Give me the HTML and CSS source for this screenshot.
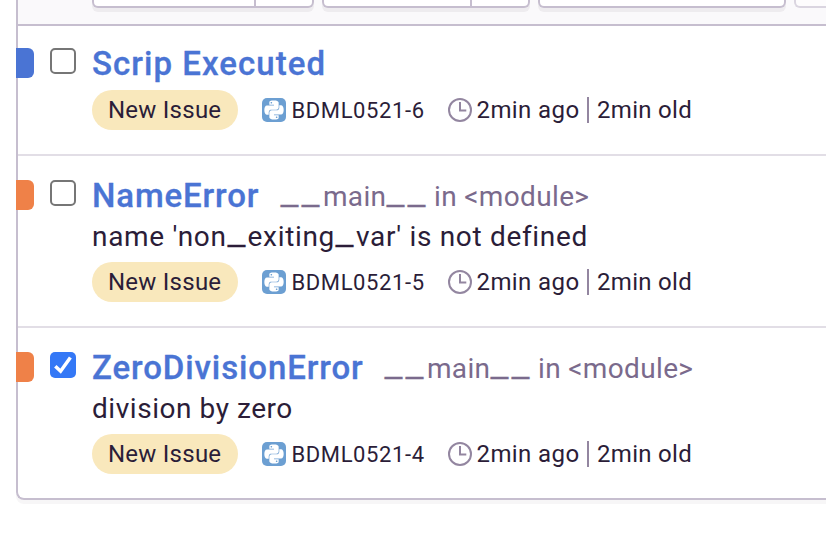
FILE: index.html
```html
<!DOCTYPE html>
<html lang="en">
<head>
<meta charset="utf-8">
<title>Issues</title>
<link rel="stylesheet" href="styles.css">
</head>
<body>
<svg class="defs" width="0" height="0" aria-hidden="true">
  <symbol id="python" viewBox="0 0 24 24">
    <rect width="24" height="24" rx="5" fill="#6c9fd2"/>
    <g transform="translate(2.4 2.4) scale(.8)" fill="#fff">
      <path id="snake" d="M14.25.18l.9.2.73.26.59.3.45.32.34.34.25.34.16.33.1.3.04.26.02.2-.01.13V8.5l-.05.63-.13.55-.21.46-.26.38-.3.31-.33.25-.35.19-.35.14-.33.1-.3.07-.26.04-.21.02H8.77l-.69.05-.59.14-.5.22-.41.27-.33.32-.27.35-.2.36-.15.37-.1.35-.07.32-.04.27-.02.21v3.06H3.17l-.21-.03-.28-.07-.32-.12-.35-.18-.36-.26-.36-.36-.35-.46-.32-.59-.28-.73-.21-.88-.14-1.05-.05-1.23.06-1.22.16-1.04.24-.87.32-.71.36-.57.4-.44.42-.33.42-.24.4-.16.36-.1.32-.05.24-.01h.16l.06.01h8.16v-.83H6.18l-.01-2.75-.02-.37.05-.34.11-.31.17-.28.25-.26.31-.23.38-.2.44-.18.51-.15.58-.12.64-.1.71-.06.77-.04.84-.02 1.27.05zm-6.3 1.98l-.23.33-.08.41.08.41.23.34.33.22.41.09.41-.09.33-.22.23-.34.08-.41-.08-.41-.23-.33-.33-.22-.41-.09-.41.09z"/>
      <use href="#snake" transform="rotate(180 12 12)"/>
    </g>
  </symbol>
  <symbol id="clock" viewBox="0 0 24 24">
    <g fill="none" stroke="#9386a0" stroke-width="2">
      <circle cx="12" cy="12" r="11"/>
      <path d="M12 4v8.5h6.3"/>
    </g>
  </symbol>
</svg>
<main class="panel">
  <header class="toolbar">
    <div class="group"><span class="seg resolve"></span><span class="seg arrow"></span></div>
    <div class="group"><span class="seg ignore"></span><span class="seg arrow"></span></div>
    <div class="group"><span class="seg review"></span></div>
    <div class="group disabled"></div>
  </header>
  <section class="issue">
    <span class="level info"></span>
    <span class="check"></span>
    <div class="body">
      <div class="head"><a class="title t-script">Scrip Executed</a></div>
      <div class="meta">
        <span class="tag"><span>New Issue</span></span>
        <svg class="icon"><use href="#python"/></svg>
        <span class="id">BDML0521-6</span>
        <svg class="icon"><use href="#clock"/></svg>
        <span class="ago">2min ago</span><i class="bar"></i><span class="old">2min old</span>
      </div>
    </div>
  </section>
  <section class="issue">
    <span class="level error"></span>
    <span class="check"></span>
    <div class="body">
      <div class="head"><a class="title t-name">NameError</a><span class="where"><span class="u">_</span><span class="u">_</span><span class="fn">main</span><span class="u">_</span><span class="u">_</span><span class="mod">in &lt;module&gt;</span></span></div>
      <p class="message m-name">name 'non<span class="u">_</span>exiting<span class="u">_</span>var' is not defined</p>
      <div class="meta">
        <span class="tag"><span>New Issue</span></span>
        <svg class="icon"><use href="#python"/></svg>
        <span class="id">BDML0521-5</span>
        <svg class="icon"><use href="#clock"/></svg>
        <span class="ago">2min ago</span><i class="bar"></i><span class="old">2min old</span>
      </div>
    </div>
  </section>
  <section class="issue">
    <span class="level error"></span>
    <span class="check checked"><svg viewBox="0 0 26 26"><path d="M5.3 14.2l5.3 5L20.4 5.4" fill="none" stroke="#fff" stroke-width="3.5"/></svg></span>
    <div class="body">
      <div class="head"><a class="title t-zero">ZeroDivisionError</a><span class="where"><span class="u">_</span><span class="u">_</span><span class="fn">main</span><span class="u">_</span><span class="u">_</span><span class="mod">in &lt;module&gt;</span></span></div>
      <p class="message m-zero">division by zero</p>
      <div class="meta">
        <span class="tag"><span>New Issue</span></span>
        <svg class="icon"><use href="#python"/></svg>
        <span class="id">BDML0521-4</span>
        <svg class="icon"><use href="#clock"/></svg>
        <span class="ago">2min ago</span><i class="bar"></i><span class="old">2min old</span>
      </div>
    </div>
  </section>
</main>
</body>
</html>
```
FILE: styles.css
```css
* { box-sizing: border-box; }
body {
  margin: 0;
  height: 536px;
  background: #fff;
  color: #2b1d38;
  font-family: Roboto, "Liberation Sans", sans-serif;
}
.defs { display: block; }
.panel {
  margin-left: 16px;
  height: 500px;
  border: 2px solid #c6becf;
  border-width: 0 0 2px 2px;
  border-radius: 0 0 0 8px;
  box-shadow: 0 4px 0 rgba(43, 34, 51, .04);
}
.toolbar {
  display: flex;
  gap: 8px;
  height: 26px;
  padding-left: 74px;
  background: #faf9fb;
  border-bottom: 2px solid #c6becf;
}
.group {
  display: flex;
  flex: none;
  height: 8px;
  border: 2px solid #c6becf;
  border-top: 0;
  border-radius: 0 0 6px 6px;
  background: #fff;
  box-shadow: 0 4px 0 rgba(43, 34, 51, .06);
}
.group.disabled {
  flex: 1;
  border-right: 0;
  border-radius: 0 0 0 6px;
  opacity: .6;
  box-shadow: none;
}
.seg + .seg { border-left: 2px solid #c6becf; }
.resolve { width: 160px; }
.arrow { width: 58px; }
.ignore { width: 146px; }
.review { width: 244px; }
.issue {
  display: flex;
  align-items: flex-start;
  height: 172px;
  padding-top: 24px;
  border-bottom: 2px solid #e2dee6;
}
.toolbar + .issue { height: 130px; padding-top: 20px; }
.issue:last-child { height: 170px; border-bottom: 0; }
.level {
  width: 18px;
  height: 30px;
  margin: 0 16px 0 -2px;
  border-radius: 0 6px 6px 0;
}
.toolbar + .issue .level { margin-top: 2px; }
.toolbar + .issue .check { margin-top: 2px; }
.info { background: #4a74d4; }
.error { background: #ef8148; }
.check {
  width: 26px;
  height: 26px;
  margin-right: 16px;
  border: 2px solid #767676;
  border-radius: 5px;
}
.checked { border: 0; background: #3478f6; }
.checked svg { display: block; width: 26px; height: 26px; }
.body { white-space: nowrap; }
.head { display: flex; height: 36px; }
.title {
  font-size: 33px;
  font-weight: 500;
  line-height: 32px;
  color: #4a74d4;
  -webkit-text-stroke: .3px currentColor;
}
.toolbar + .issue .head { height: 44px; }
.toolbar + .issue .title { line-height: 36px; }
.t-script { letter-spacing: 1.05px; }
.t-name { width: 188px; letter-spacing: .85px; }
.t-zero { width: 292px; letter-spacing: .9px; }
.where {
  display: flex;
  font-size: 28px;
  line-height: 34px;
  color: #7a6a8c;
}
.u {
  display: inline-block;
  width: 21px;
  -webkit-text-stroke: .3px currentColor;
  transform: translate(.5px, -1.5px) scaleX(1.42);
  transform-origin: 0 50%;
}
.fn { width: 64px; padding-left: 1px; letter-spacing: .3px; }
.mod { margin-left: 6px; letter-spacing: .35px; }
.message {
  margin: 0;
  height: 46px;
  font-size: 28px;
  line-height: 42px;
}
.m-name { letter-spacing: .67px; }
.m-zero { letter-spacing: .55px; }
.meta { display: flex; align-items: center; height: 40px; }
.tag {
  width: 146px;
  height: 40px;
  margin-right: 24px;
  padding-left: 16px;
  border-radius: 20px;
  background: #f9e8bc;
  font-size: 24px;
  line-height: 40px;
  letter-spacing: .25px;
}
.icon { width: 24px; height: 24px; flex: none; }
.id {
  width: 157px;
  padding-left: 5.5px;
  font-size: 22px;
  letter-spacing: .6px;
}
.id + .icon { margin-left: 5px; }
.ago { width: 115px; padding-left: 4.5px; font-size: 24px; letter-spacing: .4px; }
.bar { width: 2px; height: 26px; background: #9386a0; }
.old { padding-left: 8px; font-size: 24px; letter-spacing: .3px; }
```
